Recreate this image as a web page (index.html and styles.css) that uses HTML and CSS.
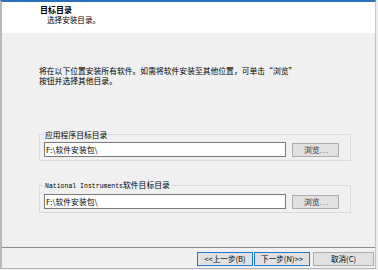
FILE: index.html
```html
<!DOCTYPE html>
<html lang="zh-CN">
<head>
<meta charset="utf-8">
<title>目标目录</title>
<link rel="stylesheet" href="styles.css">
</head>
<body>
<div class="dialog">
  <div class="header">
    <div class="title">目标目录</div>
    <div class="subtitle">选择安装目录。</div>
  </div>
  <div class="content">
    <p class="desc">将在以下位置安装所有软件。如需将软件安装至其他位置，可单击“浏览”<br>按钮并选择其他目录。</p>
    <fieldset class="group first">
      <legend class="legend">应用程序目标目录</legend>
      <div class="row">
        <div class="field">F:\软件安装包\</div>
        <div class="browse">浏览<span class="dots">...</span></div>
      </div>
    </fieldset>
    <fieldset class="group second">
      <legend class="legend"><span class="mono">National Instruments</span>软件目标目录</legend>
      <div class="row">
        <div class="field">F:\软件安装包\</div>
        <div class="browse">浏览<span class="dots">...</span></div>
      </div>
    </fieldset>
  </div>
  <div class="footer">
    <div class="btn focus b1">&lt;&lt;上一步(B)</div>
    <div class="btn focus b2">下一步(N)&gt;&gt;</div>
    <div class="btn b3">取消(C)</div>
  </div>
</div>
</body>
</html>
```
FILE: styles.css
```css
html, body {
  margin: 0;
  padding: 0;
  background: #ececec;
  width: 378px;
  height: 270px;
  overflow: hidden;
  font-family: "Noto Sans CJK SC", "Noto Sans", sans-serif;
  font-size: 8px;
  color: #000;
}
.dialog {
  box-sizing: border-box;
  width: 376px;
  height: 269px;
  background: #f0f0f0;
  border-top: 2px solid #2a70b8;
  border-left: 2px solid #b8b8b8;
  border-right: 1px solid #c4c4c4;
  border-bottom: 1px solid #b4b4b4;
  display: flex;
  flex-direction: column;
}
.header {
  background: #fff;
  height: 31px;
  padding-left: 38px;
  box-sizing: border-box;
  padding-top: 3px;
  line-height: 9px;
}
.title {
  font-weight: bold;
  font-size: 8px;
}
.subtitle {
  padding-left: 7px;
  margin-top: 0.5px;
  font-size: 7.6px;
}
.content {
  flex: 1;
  padding-left: 37px;
  padding-right: 24px;
}
.desc {
  margin: 32.5px 0 0 0;
  line-height: 10px;
  font-size: 7.8px;
}
.group {
  margin: 0;
  border: 1px solid #dadada;
  padding: 3px 9px 3px 4px;
  min-width: 0;
}
.group.first {
  margin-top: 44.5px;
}
.group.second {
  margin-top: 19px;
}
.legend {
  padding: 0 1px;
  line-height: 9px;
  font-size: 7.8px;
}
.mono {
  font-family: "Liberation Mono", "DejaVu Sans Mono", monospace;
  font-size: 6.5px;
}
.row {
  display: flex;
  align-items: center;
  gap: 6px;
}
.field {
  box-sizing: border-box;
  width: 242px;
  height: 15px;
  border: 1px solid #7a7a7a;
  background: #fff;
  padding-left: 1px;
  line-height: 13px;
  font-size: 7.8px;
}
.browse {
  box-sizing: border-box;
  width: 47px;
  height: 14px;
  border: 1px solid #adadad;
  background: #e1e1e1;
  color: #333;
  text-align: center;
  line-height: 12px;
  font-size: 7.8px;
  padding-left: 2px;
}
.dots {
  color: #888;
  letter-spacing: 1px;
}
.footer {
  border-top: 1px solid #8c8c8c;
  height: 21px;
  box-sizing: border-box;
  display: flex;
  justify-content: flex-end;
  align-items: flex-start;
  padding-top: 4px;
  padding-right: 1px;
}
.btn {
  box-sizing: border-box;
  height: 14px;
  border: 1px solid #adadad;
  background: #e1e1e1;
  text-align: center;
  line-height: 12px;
  font-size: 7.6px;
}
.btn.focus {
  border-color: #1f7bd0;
}
.b1 {
  width: 56px;
}
.b2 {
  width: 56px;
  margin-left: 1px;
}
.b3 {
  width: 61px;
  margin-left: 3px;
}
```
